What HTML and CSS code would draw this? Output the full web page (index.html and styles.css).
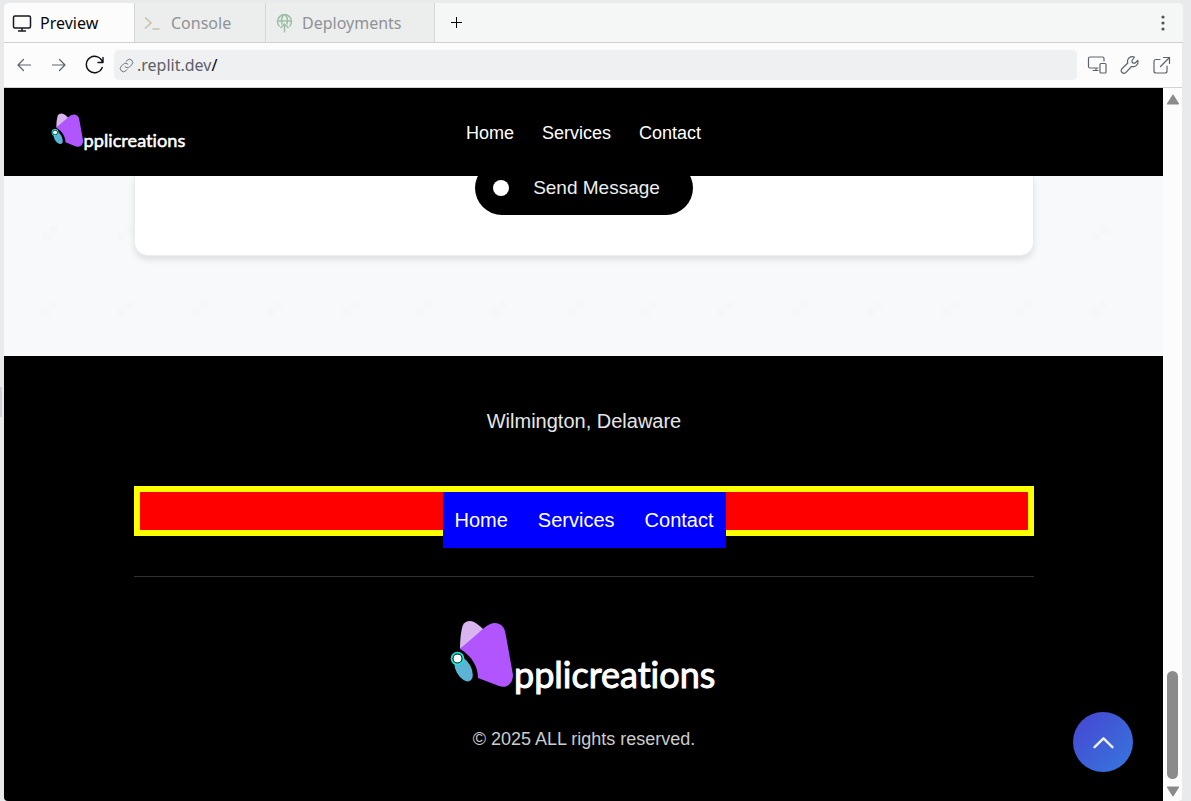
FILE: index.html
```html
<!DOCTYPE html>
<html lang="en">
<head>
<meta charset="utf-8">
<title>Applicreations preview</title>
<link rel="stylesheet" href="styles.css">
</head>
<body>
<div class="pane">
  <div class="tabs" role="tablist">
    <button class="tab active" role="tab" aria-selected="true">
      <svg class="icon" viewBox="0 0 20 20" stroke="#16191d"><rect x="1.500" y="3" width="17" height="12" rx="1.500"/><path d="M10 15v3M6 18h8"/></svg>
      Preview</button>
    <button class="tab console" role="tab">
      <svg class="icon" viewBox="0 0 20 20" stroke="#c9bfa9"><path d="M2 4.500l6 5.500-6 5.500M9.500 16h7"/></svg>
      Console</button>
    <button class="tab deploy" role="tab">
      <svg class="icon" viewBox="0 0 20 20" stroke="#9dbfa5"><path d="M5.500 13.500A7 7 0 1 1 15.500 13.500M3.500 8h14M8 11.500C7 6 8.500 2.500 10.500 1.500C12.500 2.500 14 6 13 11.500M10.500 19.500v-8M6.500 15l4-4 4 4"/></svg>
      Deployments</button>
    <button class="add" aria-label="New tab"><svg viewBox="0 0 12 12"><path d="M6 0v12M0 6h12"/></svg></button>
    <button class="more" aria-label="More"><svg viewBox="0 0 4 16"><circle cx="2" cy="2" r="1.600"/><circle cx="2" cy="8" r="1.600"/><circle cx="2" cy="14" r="1.600"/></svg></button>
  </div>
  <div class="toolbar">
    <button class="tool" aria-label="Back"><svg viewBox="0 0 20 20"><path d="M16.500 10H4M9.500 4.500L4 10l5.500 5.500"/></svg></button>
    <button class="tool" aria-label="Forward"><svg viewBox="0 0 20 20"><path d="M3.500 10H16M10.500 4.500L16 10l-5.500 5.500"/></svg></button>
    <button class="tool reload" aria-label="Reload"><svg viewBox="0 0 20 20"><path d="M19 2.500v5h-5M18.500 7.500A8.200 8.200 0 1 0 18.200 12.500"/></svg></button>
    <div class="address">
      <svg viewBox="0 0 20 20"><path d="M8 11.500a4 4 0 0 0 6 .5l3-3a4 4 0 0 0-6-6L9.500 4.500M12 8.500a4 4 0 0 0-6-.5l-3 3a4 4 0 0 0 6 6l1.500-1.500"/></svg>
      <div class="url"><span>.replit.dev</span><span class="slash">/</span></div>
    </div>
    <div class="actions">
      <button class="tool" aria-label="Devices"><svg viewBox="0 0 20 20"><path d="M11 13H3a1.500 1.500 0 0 1-1.500-1.500v-8A1.500 1.500 0 0 1 3 2h12.500A1.500 1.500 0 0 1 17 3.500V6M9 13v2.500M6 15.500h5"/><rect x="13" y="8.500" width="6" height="9.500" rx="1"/></svg></button>
      <button class="tool" aria-label="Developer tools"><svg viewBox="0 0 20 20"><path d="M13 5.500v1.500l1.300 1.200h1.500l3-2.700c1 4-2.500 7-6.300 6L6.500 17.800C4 19.500 1 16.500 2.700 14L8.800 8C7.500 4 11 .8 15.500 2Z"/></svg></button>
      <button class="tool" aria-label="Open in new window"><svg viewBox="0 0 20 20"><path d="M9 4.500H5a2 2 0 0 0-2 2v9.500a2 2 0 0 0 2 2h9a2 2 0 0 0 2-2V11M12.500 2.500h6v6M18.500 2.500L9.500 11.500"/></svg></button>
    </div>
  </div>
  <div class="view">
    <div class="site">
      <header class="header">
        <a class="logo" href="#" aria-label="Applicreations home">
          <svg viewBox="0 0 290 95">
            <path fill="#d8b5ef" d="M20 39C20 29 21 20 23 15C25 11 30 10 34 12C38 14 41 17 44 20Z"/>
            <path fill="#b055ff" d="M20 39L44 18C50 13 55 12 59 14C64 16 65 20 66 26L73 65C73 73 67 79 59 76L38 68C38 57 32 46 20 39Z"/>
            <ellipse cx="23.500" cy="59" rx="7.500" ry="13.500" transform="rotate(-29 23.500 59)" fill="#5bb3d5"/>
            <circle cx="17.500" cy="48.500" r="6.800" fill="#16e8dc"/><circle cx="17.500" cy="48.500" r="5"/><circle cx="17.500" cy="48.500" r="4" fill="#fff"/>
            <text class="brand-text" x="74" y="78">pplicreations</text>
          </svg>
        </a>
        <nav class="nav"><a href="#">Home</a><a href="#">Services</a><a href="#">Contact</a></nav>
      </header>
      <main class="contact">
        <div class="card"><button class="send"><span class="dot"></span>Send Message</button></div>
      </main>
      <footer class="footer">
        <p class="place">Wilmington, Delaware</p>
        <div class="bar"><nav class="footnav"><a href="#">Home</a><a href="#">Services</a><a href="#">Contact</a></nav></div>
        <div class="bottom">
          <svg class="footlogo" viewBox="0 0 290 95">
            <path fill="#d8b5ef" d="M20 39C20 29 21 20 23 15C25 11 30 10 34 12C38 14 41 17 44 20Z"/>
            <path fill="#b055ff" d="M20 39L44 18C50 13 55 12 59 14C64 16 65 20 66 26L73 65C73 73 67 79 59 76L38 68C38 57 32 46 20 39Z"/>
            <ellipse cx="23.500" cy="59" rx="7.500" ry="13.500" transform="rotate(-29 23.500 59)" fill="#5bb3d5"/>
            <circle cx="17.500" cy="48.500" r="6.800" fill="#16e8dc"/><circle cx="17.500" cy="48.500" r="5"/><circle cx="17.500" cy="48.500" r="4" fill="#fff"/>
            <text class="brand-text" x="74" y="78">pplicreations</text>
          </svg>
          <p class="copy">© 2025 ALL rights reserved.</p>
        </div>
      </footer>
      <button class="totop" aria-label="Back to top"><svg viewBox="0 0 20 12"><path d="M1.500 10.500L10 2l8.500 8.500"/></svg></button>
    </div>
    <div class="scroll">
      <svg viewBox="0 0 12 10"><path d="M6 1L11 9H1Z"/></svg>
      <div class="thumb"></div>
      <svg viewBox="0 0 12 10"><path d="M6 9L11 1H1Z"/></svg>
    </div>
  </div>
</div>
<div class="handle"></div>
</body>
</html>
```
FILE: styles.css
```css
* { box-sizing: border-box; }
body { margin: 0; background: #e9eaec; font-family: "Liberation Sans", Arial, sans-serif; overflow: hidden; }
button { border: 0; padding: 0; background: none; font: inherit; color: inherit; }
a { color: inherit; text-decoration: none; }
p { margin: 0; }
svg { display: block; flex: none; }
.pane { height: 100vh; padding: 3px 8px 0 4px; display: flex; flex-direction: column; }

.tabs { height: 40px; flex: none; display: flex; background: #f5f7f6; border-radius: 5px 5px 0 0; overflow: hidden; border-bottom: 1px solid #d0d2d2; font: 16px "Noto Sans", sans-serif; }
.tab { display: flex; align-items: center; gap: 8px; width: 131px; padding-left: 8px; height: 40px; background: #eceeed; color: #8f9297; border-right: 1px solid #d5d8d7; }
.tab.active { background: #fcfcfc; color: #07080a; }
.tab.deploy { width: 169px; }
.icon { width: 20px; height: 20px; fill: none; stroke-width: 1.5; }
.add { width: 42px; display: grid; place-items: center; }
.add svg { width: 11px; height: 11px; stroke: #000; stroke-width: 1.1; }
.more { width: 40px; margin-left: auto; display: grid; place-items: center; }
.more svg { width: 4px; height: 16px; fill: #50555c; }

.toolbar { height: 45px; flex: none; display: flex; align-items: center; margin-right: 1px; padding: 0 11px 0 10px; background: #fcfcfc; border-bottom: 1px solid #d0d2d2; }
.tool { width: 20px; height: 20px; margin-right: 15px; }
.tool svg, .address svg { width: 100%; height: 100%; fill: none; stroke: #5d636b; stroke-width: 1.2; stroke-linecap: round; stroke-linejoin: round; }
.tool.reload { margin-right: 10px; }
.tool.reload svg { stroke: #0f1114; stroke-width: 1.4; }
.address { flex: 1; height: 30px; display: flex; align-items: center; gap: 3px; padding-left: 5px; background: #eff0f2; border-radius: 5px; color: #5b6068; font: 16px "Noto Sans", sans-serif; }
.address svg { width: 15px; height: 15px; }
.url { display: flex; }
.slash { color: #000; }
.actions { display: flex; gap: 12px; padding-left: 10px; }
.actions .tool { margin: 0; }

.view { flex: 1; min-height: 0; display: flex; margin-right: 1px; border-radius: 0 0 4px 4px; overflow: hidden; }
.site { flex: 1; position: relative; display: flex; flex-direction: column; background: #000; overflow: hidden; }
.header { position: relative; z-index: 1; height: 88px; flex: none; display: grid; grid-template-columns: 1fr auto 1fr; align-items: center; padding: 0 42px; background: #000; color: #fff; }
.logo svg { width: 147px; height: 48px; }
.brand-text { font-family: Lato, sans-serif; font-size: 36px; font-variant-ligatures: none; fill: #fff; stroke: #fff; stroke-width: 1; }
.nav { display: flex; gap: 28px; padding-top: 2px; font-size: 18px; line-height: 22px; }

.contact {
  padding: 0 129px 100px 130px;
  background-color: #f8f9fb;
  background-image:
    conic-gradient(from 90deg at 67px 67px, #f6f7f9 90deg, transparent 0),
    conic-gradient(from 90deg at 67px 67px, #f6f7f9 90deg, transparent 0);
  background-size: 75px 75px;
  background-position: 46px 65px, 54px 58px;
}
.card { height: 80px; display: flex; justify-content: center; align-items: flex-start; background: #fff; border: 1px solid #ececee; border-top: 0; border-radius: 0 0 14px 14px; box-shadow: 0 4px 6px rgba(0, 0, 0, .1); }
.send { display: flex; align-items: center; gap: 24px; height: 54px; margin-top: -15px; padding: 0 33px 0 18px; border-radius: 27px; background: #000; color: #eee; font-size: 19px; }
.dot { width: 16px; height: 16px; border-radius: 50%; background: #fff; }

.footer { flex: 1; padding: 50px 129px 0 130px; display: flex; flex-direction: column; text-align: center; color: #e5e5e5; font-size: 20px; }
.place { line-height: 30px; margin-bottom: 50px; }
.bar { height: 50px; display: flex; justify-content: center; align-items: flex-start; border: 6px solid #ff0; background: #f00; }
.footnav { display: flex; align-items: center; gap: 30px; height: 56px; flex: none; padding: 0 12px; background: #00f; color: #fff; }
.bottom { margin-top: 40px; padding-top: 33px; border-top: 1px solid #333; display: flex; flex-direction: column; align-items: center; }
.footlogo { width: 290px; height: 95px; margin: 0 0 20px 2px; }
.copy { font-size: 18px; line-height: 28px; color: #ccc; }

.totop { position: absolute; right: 30px; bottom: 29px; width: 60px; height: 60px; display: grid; place-items: center; border-radius: 50%; background: linear-gradient(135deg, #4844d2, #3578dd); }
.totop svg { width: 21px; height: 13px; fill: none; stroke: #eee; stroke-width: 2.3; stroke-linecap: round; stroke-linejoin: round; }
.scroll { width: 19px; flex: none; display: flex; flex-direction: column; align-items: center; padding: 6px 0 4px; background: #fcfcfc; }
.scroll svg { width: 14px; height: 11px; fill: #8b8b8b; stroke: #8b8b8b; stroke-linejoin: round; }
.thumb { width: 11px; height: 108px; margin: auto 0 7px; border-radius: 6px; background: #8b8b8b; }
.handle { position: absolute; left: 0; top: 387px; width: 2px; height: 30px; background: #d0d2d5; }
```
